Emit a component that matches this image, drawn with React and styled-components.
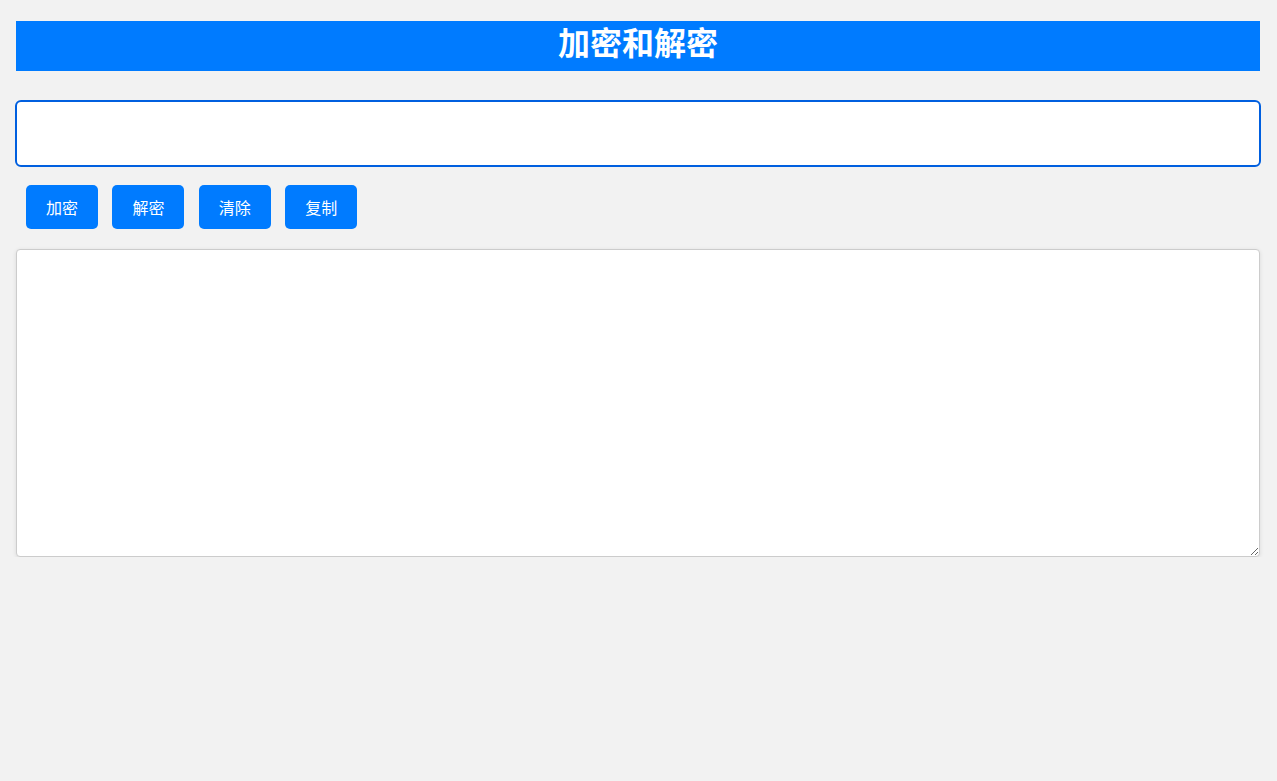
import React, { useState } from 'react';
import styled, { createGlobalStyle } from 'styled-components';

//******* STYLING ********************************/
const GlobalStyle = createGlobalStyle`
  html, body {
    margin: 0;
    padding: 0;
    background: #f2f2f2;
    font-family: "Liberation Sans", Arial, "Noto Sans CJK SC", sans-serif;
  }
`;

const Page = styled.div`
  padding: 21px 17px 0 16px;
  display: flex;
  flex-direction: column;
`;

const Header = styled.h1`
  margin: 0;
  height: 50px;
  line-height: 41px;
  background: #007bff;
  color: #ffffff;
  text-align: center;
  font-size: 32px;
  font-weight: bold;
  font-family: "Noto Sans CJK SC", "Liberation Sans", sans-serif;
`;

const KeyInput = styled.input`
  box-sizing: border-box;
  width: calc(100% + 2px);
  margin: 29px 0 0 -1px;
  height: 67px;
  padding: 0 12px;
  border: 2px solid #005fdf;
  border-radius: 6px;
  background: #ffffff;
  font-size: 16px;
  outline: none;
`;

const ButtonRow = styled.div`
  display: flex;
  gap: 14.4px;
  padding-left: 10px;
  margin-top: 18px;
`;

const ActionButton = styled.button`
  width: 72px;
  height: 44px;
  border: none;
  border-radius: 5px;
  background: #007bff;
  color: #ffffff;
  font-size: 16px;
  font-family: "Noto Sans CJK SC", "Liberation Sans", sans-serif;
  cursor: pointer;
  padding: 0;
`;

const Output = styled.textarea`
  box-sizing: border-box;
  margin-top: 20px;
  height: 308px;
  border: 1px solid #cccccc;
  border-radius: 4px;
  background: #ffffff;
  box-shadow: 0 1px 4px rgba(0, 0, 0, 0.1);
  padding: 10px;
  font-size: 16px;
  resize: vertical;
  outline: none;
`;

//********************************************** */

const actions = ['加密', '解密', '清除', '复制'];

export default function App() {
  const [text, setText] = useState('');
  const [key, setKey] = useState('');

  return (
    <Page>
      <GlobalStyle />
      <Header>加密和解密</Header>
      <KeyInput value={key} onChange={(e) => setKey(e.target.value)} />
      <ButtonRow>
        {actions.map((label) => (
          <ActionButton key={label}>{label}</ActionButton>
        ))}
      </ButtonRow>
      <Output value={text} onChange={(e) => setText(e.target.value)} />
    </Page>
  );
}
